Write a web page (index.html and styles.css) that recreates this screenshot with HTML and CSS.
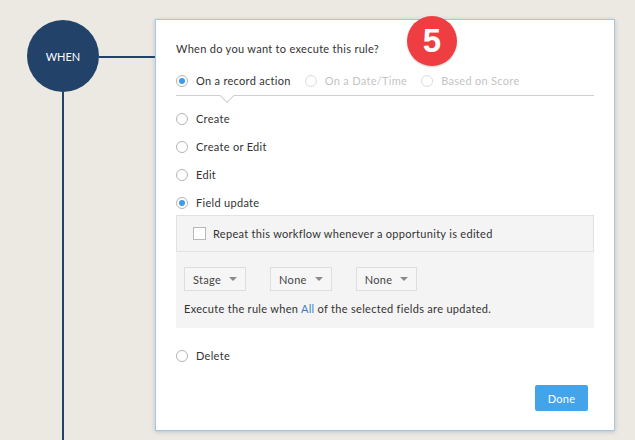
FILE: index.html
```html
<!DOCTYPE html>
<html lang="en">
<head>
    <meta charset="UTF-8">
    <meta name="viewport" content="width=device-width, initial-scale=1.0">
    <title>Workflow Rule - When</title>
    <link rel="stylesheet" href="styles.css">
</head>
<body>
    <div class="flow">
        <div class="node-col">
            <div class="node">WHEN</div>
            <div class="vline"></div>
        </div>
        <div class="hline"></div>
        <div class="panel">
            <div class="badge">5</div>
            <p class="question">When do you want to execute this rule?</p>
            <div class="tabs">
                <label class="tab"><span class="radio checked"></span>On a record action</label>
                <label class="tab disabled"><span class="radio"></span>On a Date/Time</label>
                <label class="tab disabled"><span class="radio"></span>Based on Score</label>
                <span class="notch"></span>
            </div>
            <div class="options">
                <label class="option"><span class="radio"></span>Create</label>
                <label class="option"><span class="radio"></span>Create or Edit</label>
                <label class="option"><span class="radio"></span>Edit</label>
                <label class="option"><span class="radio checked"></span>Field update</label>
            </div>
            <div class="field-box">
                <div class="repeat">
                    <span class="checkbox"></span>Repeat this workflow whenever a opportunity is edited
                </div>
                <div class="fields">
                    <div class="selects">
                        <div class="select">Stage<span class="caret"></span></div>
                        <div class="select">None<span class="caret"></span></div>
                        <div class="select">None<span class="caret"></span></div>
                    </div>
                    <p class="note">Execute the rule when <a href="#">All</a> of the selected fields are updated.</p>
                </div>
            </div>
            <label class="option delete"><span class="radio"></span>Delete</label>
            <div class="actions">
                <button class="done">Done</button>
            </div>
        </div>
    </div>
</body>
</html>
```

FILE: styles.css
```css
body {
    margin: 0;
    height: 440px;
    overflow: hidden;
    background-color: #ece9e2;
    font-family: Lato, "Open Sans", sans-serif;
    font-size: 11px;
    letter-spacing: 0.3px;
    color: #333;
}
.flow {
    display: flex;
    align-items: flex-start;
    padding: 19px 0 0 27px;
    height: 421px;
}
.node-col {
    display: flex;
    flex-direction: column;
    align-items: center;
    width: 72px;
    height: 100%;
    margin-top: 1px;
}
.node {
    width: 72px;
    height: 72px;
    border-radius: 50%;
    background-color: #22426a;
    color: #fff;
    display: flex;
    align-items: center;
    justify-content: center;
    font-size: 11px;
    letter-spacing: 0;
}
.vline {
    width: 2px;
    flex: 1;
    background-color: #22426a;
}
.hline {
    width: 56px;
    height: 2px;
    margin-top: 37px;
    background-color: #22426a;
}
.panel {
    position: relative;
    width: 418px;
    height: 371px;
    padding: 20px 20px 19px 20px;
    background-color: #fff;
    border: 1px solid #a9c6dd;
    box-shadow: 0 1px 4px rgba(80, 120, 160, 0.35);
}
.badge {
    position: absolute;
    left: 251px;
    top: -4px;
    width: 50px;
    height: 50px;
    border-radius: 50%;
    background-color: #ef3e42;
    color: #fff;
    font-family: "Liberation Sans", Arial, sans-serif;
    font-size: 33px;
    font-weight: bold;
    letter-spacing: 0;
    display: flex;
    align-items: center;
    justify-content: center;
    box-shadow: 0 1px 2px rgba(0,0,0,0.2);
}
.question {
    margin: 0;
    padding-top: 1px;
    line-height: 16px;
}
.tabs {
    position: relative;
    display: flex;
    gap: 14px;
    margin-top: 16px;
    padding-bottom: 6px;
    border-bottom: 1px solid #cfcfcf;
}
.tab, .option {
    display: flex;
    align-items: center;
    line-height: 16px;
}
.tab.disabled {
    color: #c4c4c4;
}
.notch {
    position: absolute;
    left: 46px;
    bottom: -6px;
    width: 9px;
    height: 9px;
    background-color: #fff;
    border-right: 1px solid #cfcfcf;
    border-bottom: 1px solid #cfcfcf;
    transform: rotate(45deg);
}
.radio {
    width: 10px;
    height: 10px;
    border: 1px solid #b5b5b5;
    border-radius: 50%;
    margin-right: 8px;
    display: flex;
    align-items: center;
    justify-content: center;
    flex-shrink: 0;
}
.radio.checked::after {
    content: "";
    width: 6px;
    height: 6px;
    border-radius: 50%;
    background-color: #3d9be9;
}
.disabled .radio {
    border-color: #dcdcdc;
}
.options {
    display: flex;
    flex-direction: column;
    gap: 12px;
    margin-top: 15px;
}
.field-box {
    margin-top: 4px;
    background-color: #f4f4f4;
}
.repeat {
    display: flex;
    align-items: center;
    height: 35px;
    padding-left: 16px;
    border: 1px solid #e2e2e2;
}
.checkbox {
    width: 11px;
    height: 11px;
    border: 1px solid #b8b8b8;
    background-color: #fff;
    margin-right: 7px;
}
.fields {
    padding: 15px 8px 11px;
}
.selects {
    display: flex;
    gap: 24px;
}
.select {
    display: flex;
    align-items: center;
    height: 22px;
    padding: 0 8px 0 8px;
    border: 1px solid #dedede;
    background-color: #f6f6f6;
    color: #444;
}
.caret {
    margin-left: 8px;
    border-left: 4px solid transparent;
    border-right: 4px solid transparent;
    border-top: 4px solid #8a8a8a;
}
.note {
    margin: 10px 0 0;
    line-height: 16px;
}
.note a {
    color: #3b7fc4;
    text-decoration: none;
}
.delete {
    margin-top: 20px;
}
.actions {
    display: flex;
    justify-content: flex-end;
    margin-top: 21px;
    padding-right: 6px;
}
.done {
    width: 53px;
    height: 26px;
    border: none;
    border-radius: 2px;
    background-color: #44a4e9;
    color: #fff;
    font-family: inherit;
    font-size: 11px;
    letter-spacing: 0.3px;
}
```
